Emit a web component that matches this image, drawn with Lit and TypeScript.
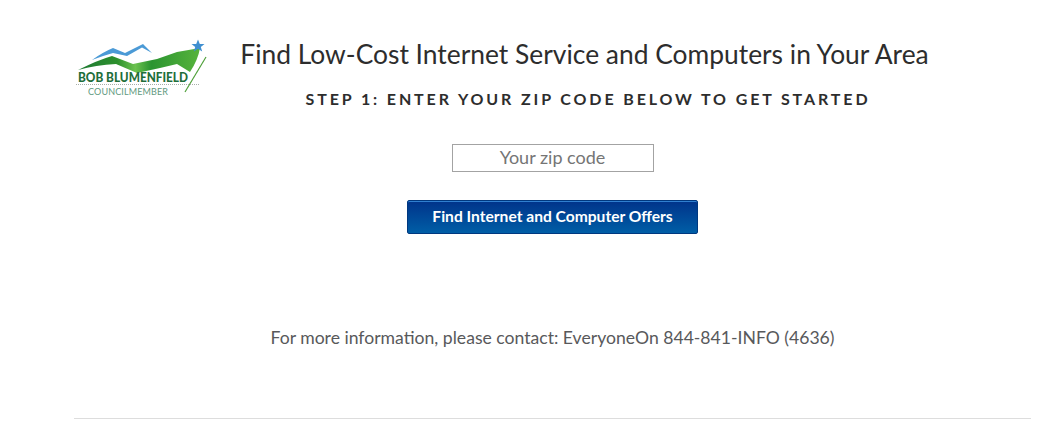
import { LitElement, html, css } from "lit";
import { customElement } from "lit/decorators.js";

@customElement("app-root")
export class AppRoot extends LitElement {
  static styles = css`
    :host { display: block; width: 1056px; height: 440px; overflow: hidden; background: #fff; font-family: Lato, "Liberation Sans", sans-serif; color: #2d2d2d; }
    .page { padding: 38px 25px 0 74px; display: flex; flex-direction: column; }
    .top { display: flex; height: 76px; }
    .logo { width: 134px; height: 62px; flex: none; }
    .head { margin-left: 32px; width: 689px; display: flex; flex-direction: column; align-items: center; }
    h1 { margin: -2px 0 0; font-size: 26.4px; font-weight: 400; line-height: 36px; white-space: nowrap; }
    h2 { margin: 16px 0 0 7px; font-size: 16px; font-weight: 700; letter-spacing: 2.88px; line-height: 22px; white-space: nowrap; }
    .form { display: flex; flex-direction: column; align-items: center; margin-top: 30px; }
    .zip { width: 202px; height: 28px; box-sizing: border-box; border: 1px solid #a3a3a3; font-size: 18px; text-align: center; color: #757575; line-height: 25px; }
    .btn { margin-top: 28px; width: 291px; height: 34px; box-sizing: border-box; padding-bottom: 2px; border: 1px solid #00387f; border-radius: 2px; background: linear-gradient(#00338a, #005ea6); box-shadow: inset 0 1px 0 #2f7fd0; color: #fff; font-size: 15.6px; font-weight: 700; display: flex; align-items: center; justify-content: center; }
    .info { margin-top: 92px; text-align: center; font-size: 17.6px; color: #58595b; line-height: 24px; }
    hr { margin: 68px 0 0; border: 0; border-top: 1px solid #ddd; }
  `;
  render() {
    return html`<div class="page">
      <div class="top">
        <svg class="logo" viewBox="74 38 134 62">
          <defs>
            <linearGradient id="g" x1="0" x2="1" y1="0" y2="0">
              <stop offset="0" stop-color="#1f7a34"/>
              <stop offset="0.32" stop-color="#2c8f2c"/>
              <stop offset="0.47" stop-color="#6cc24f"/>
              <stop offset="0.6" stop-color="#2a9430"/>
              <stop offset="1" stop-color="#57b33c"/>
            </linearGradient>
          </defs>
          <path d="M92 60 Q103 52 113 48 L125 53 L143 44 L152 53 L142 47.5 L127 56 L113 53 Q102 56 92 60 Z" fill="#4b9ad6"/>
          <path d="M78 70 Q98 60 112 56 L133 64 L157 59 L177 52 L200 48 Q198 60 190 72 L177 64 L160 68 L137 73 L116 64 Q96 65 78 70 Z" fill="url(#g)"/>
          <path d="M206 57 L185 92" stroke="#4fa03a" stroke-width="1.2"/>
          <path d="M198 39.5 L199.8 44 L204.5 44 L200.8 47 L202.2 51.5 L198 48.8 L193.8 51.5 L195.2 47 L191.5 44 L196.2 44 Z" fill="#3f8fd0"/>
          <text x="78" y="82" font-family="Lato" font-size="12.5" font-weight="900" textLength="110" lengthAdjust="spacingAndGlyphs" fill="#1f6e3a">BOB BLUMENFIELD</text>
          <path d="M76 84.5 H200" stroke="#a8b0aa" stroke-width="1" stroke-dasharray="1 1"/>
          <text x="88" y="95" font-family="Lato" font-size="9" textLength="80" fill="#5f9a80">COUNCILMEMBER</text>
        </svg>
        <div class="head">
          <h1>Find Low-Cost Internet Service and Computers in Your Area</h1>
          <h2>STEP 1: ENTER YOUR ZIP CODE BELOW TO GET STARTED</h2>
        </div>
      </div>
      <div class="form">
        <div class="zip">Your zip code</div>
        <div class="btn">Find Internet and Computer Offers</div>
      </div>
      <div class="info">For more information, please contact: EveryoneOn 844-841-INFO (4636)</div>
      <hr />
    </div>`;
  }
}
